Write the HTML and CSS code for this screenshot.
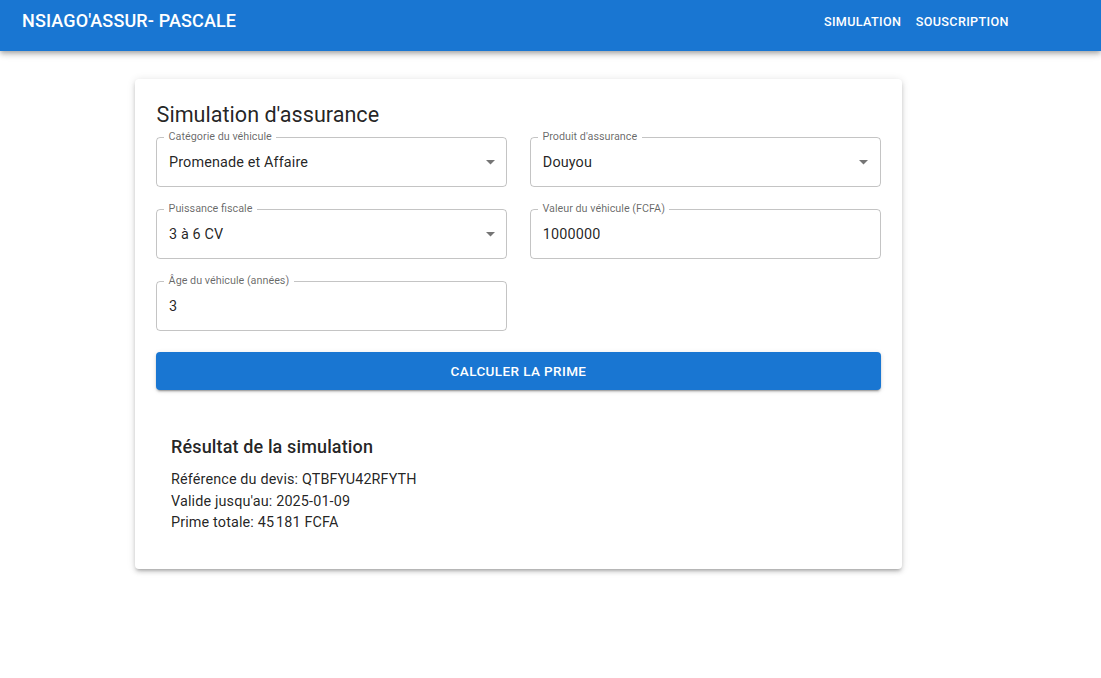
FILE: index.html
```html
<!DOCTYPE html>
<html lang="fr">
<head>
<meta charset="utf-8">
<title>NSIAGO'ASSUR- PASCALE</title>
<link rel="stylesheet" href="styles.css">
</head>
<body>
<header class="appbar">
  <div class="brand">NSIAGO'ASSUR- PASCALE</div>
  <nav class="nav">
    <a class="nav-btn" href="#">Simulation</a>
    <a class="nav-btn" href="#">Souscription</a>
  </nav>
</header>

<main class="page">
  <section class="card">
    <h1 class="card-title">Simulation d'assurance</h1>

    <div class="form-grid">
      <div class="field select">
        <span class="field-label">Catégorie du véhicule</span>
        <span class="field-value">Promenade et Affaire</span>
        <svg class="arrow" viewBox="7 10 10 5" width="9" height="4.5"><path d="M7 10l5 5 5-5z"/></svg>
      </div>
      <div class="field select">
        <span class="field-label">Produit d'assurance</span>
        <span class="field-value">Douyou</span>
        <svg class="arrow" viewBox="7 10 10 5" width="9" height="4.5"><path d="M7 10l5 5 5-5z"/></svg>
      </div>
      <div class="field select">
        <span class="field-label">Puissance fiscale</span>
        <span class="field-value">3 à 6 CV</span>
        <svg class="arrow" viewBox="7 10 10 5" width="9" height="4.5"><path d="M7 10l5 5 5-5z"/></svg>
      </div>
      <div class="field">
        <span class="field-label">Valeur du véhicule (FCFA)</span>
        <span class="field-value">1000000</span>
      </div>
      <div class="field">
        <span class="field-label">Âge du véhicule (années)</span>
        <span class="field-value">3</span>
      </div>
    </div>

    <button class="primary-btn" type="button">Calculer la prime</button>

    <div class="result">
      <h2 class="result-title">Résultat de la simulation</h2>
      <p class="result-line">Référence du devis: QTBFYU42RFYTH</p>
      <p class="result-line">Valide jusqu'au: 2025-01-09</p>
      <p class="result-line">Prime totale: 45&#8239;181 FCFA</p>
    </div>
  </section>
</main>
</body>
</html>
```

FILE: styles.css
```css
* {
  box-sizing: border-box;
}

body {
  margin: 0;
  background: #ffffff;
  font-family: Roboto, "Liberation Sans", Arial, sans-serif;
  color: rgba(0, 0, 0, 0.87);
}

.appbar {
  height: 51px;
  background: #1976d2;
  color: #ffffff;
  display: flex;
  align-items: flex-start;
  padding: 0 85px 0 22px;
  box-shadow: 0px 2px 4px -1px rgba(0, 0, 0, 0.2),
    0px 4px 5px 0px rgba(0, 0, 0, 0.14),
    0px 1px 10px 0px rgba(0, 0, 0, 0.12);
  position: relative;
  z-index: 2;
}

.brand {
  font-size: 18px;
  font-weight: 500;
  line-height: 24px;
  margin-top: 9px;
  letter-spacing: 0.135px;
}

.nav {
  margin-left: auto;
  display: flex;
  margin-top: 10px;
}

.nav-btn {
  color: #ffffff;
  text-decoration: none;
  text-transform: uppercase;
  font-size: 12.6px;
  font-weight: 500;
  line-height: 24px;
  letter-spacing: 0.36px;
  padding: 0 7.2px;
}

.page {
  padding: 28px 0 40px 135px;
}

.card {
  width: 767px;
  background: #ffffff;
  border-radius: 4px;
  padding: 21.6px 21px;
  box-shadow: 0px 3px 3px -2px rgba(0, 0, 0, 0.2),
    0px 3px 4px 0px rgba(0, 0, 0, 0.14),
    0px 1px 8px 0px rgba(0, 0, 0, 0.12);
}

.card-title {
  margin: 0 0 7.6px 0.6px;
  font-size: 21.6px;
  font-weight: 400;
  line-height: 28.8px;
}

.form-grid {
  display: grid;
  grid-template-columns: 1fr 1fr;
  column-gap: 22.6px;
  row-gap: 21.6px;
}

.field {
  position: relative;
  height: 50.4px;
  border: 1px solid rgba(0, 0, 0, 0.23);
  border-radius: 4px;
  display: flex;
  align-items: center;
  padding: 0 11.6px 0 12px;
}

.field-label {
  position: absolute;
  top: -9.1px;
  left: 7.1px;
  padding: 0 4.5px;
  background: #ffffff;
  font-size: 10.8px;
  line-height: 15.5px;
  color: rgba(0, 0, 0, 0.6);
  white-space: nowrap;
}

.field-value {
  font-size: 14.4px;
  line-height: 20.7px;
  letter-spacing: 0.135px;
  color: rgba(0, 0, 0, 0.87);
  flex: 1;
  margin-top: 2px;
}

.arrow {
  display: block;
  fill: rgba(0, 0, 0, 0.54);
  margin-top: 1px;
}

.primary-btn {
  display: block;
  width: 100%;
  height: 38px;
  margin-top: 20.3px;
  border: none;
  border-radius: 4px;
  background: #1976d2;
  color: #ffffff;
  font-family: Roboto, "Liberation Sans", Arial, sans-serif;
  font-size: 13.5px;
  font-weight: 500;
  letter-spacing: 0.39px;
  text-transform: uppercase;
  box-shadow: 0px 3px 1px -2px rgba(0, 0, 0, 0.2),
    0px 2px 2px 0px rgba(0, 0, 0, 0.14),
    0px 1px 5px 0px rgba(0, 0, 0, 0.12);
}

.result {
  margin-top: 29.4px;
  padding: 14.4px 15px 13.4px;
}

.result-title {
  margin: 0 0 7px;
  font-size: 18px;
  font-weight: 500;
  line-height: 28.8px;
  letter-spacing: 0.135px;
}

.result-line {
  margin: 0;
  font-size: 14.4px;
  line-height: 21.6px;
  letter-spacing: 0.135px;
}
```
